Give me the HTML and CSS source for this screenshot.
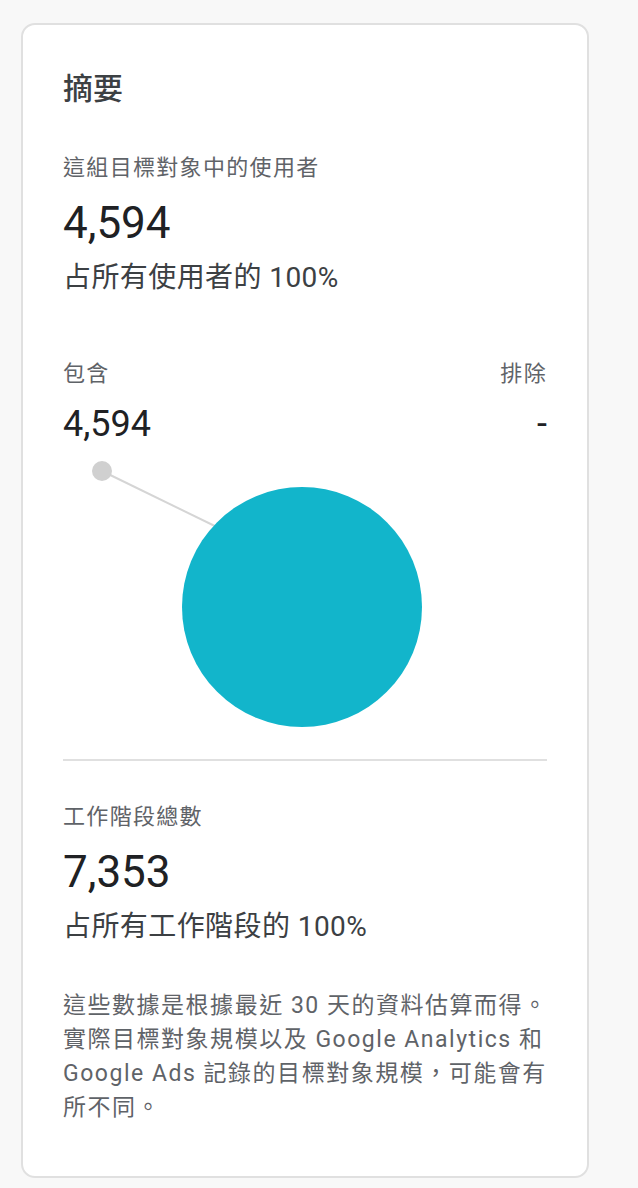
FILE: index.html
```html
<!DOCTYPE html>
<html lang="zh-Hant">
<head>
    <meta charset="UTF-8">
    <meta name="viewport" content="width=device-width, initial-scale=1.0">
    <title>摘要</title>
    <link rel="stylesheet" href="styles.css">
</head>
<body>
    <div class="card">
        <h2 class="title">摘要</h2>

        <div class="label">這組目標對象中的使用者</div>
        <div class="big-num">4,594</div>
        <div class="share">占所有使用者的 100%</div>

        <div class="split">
            <div class="col">
                <div class="label">包含</div>
                <div class="mid-num">4,594</div>
            </div>
            <div class="col right">
                <div class="label">排除</div>
                <div class="mid-num">-</div>
            </div>
        </div>

        <!-- pie chart: only one slice -->
        <svg class="pie" width="484" height="290" viewBox="0 0 484 290">
            <line x1="39" y1="15" x2="160" y2="74" stroke="#d5d5d5" stroke-width="2"/>
            <circle cx="39" cy="15" r="10" fill="#d0d0d0"/>
            <circle cx="239" cy="151" r="120" fill="#12b5cb"/>
        </svg>

        <hr class="divider">

        <div class="label">工作階段總數</div>
        <div class="big-num">7,353</div>
        <div class="share">占所有工作階段的 100%</div>

        <p class="note">這些數據是根據最近 30 天的資料估算而得。<br>實際目標對象規模以及 Google Analytics 和<br>Google Ads 記錄的目標對象規模，可能會有<br>所不同。</p>
    </div>
</body>
</html>
```

FILE: styles.css
```css
body {
    margin: 0;
    padding: 23px 0 0 21px;
    background-color: #f8f8f8;
    font-family: Roboto, "Noto Sans CJK TC", sans-serif;
    color: #202124;
}

.card {
    box-sizing: border-box;
    width: 568px;
    height: 1155px;
    background-color: white;
    border: 2px solid #e0e0e0;
    border-radius: 14px;
    padding: 44px 40px 0 40px;
}

.title {
    margin: 0 0 45px 0;
    font-size: 30px;
    line-height: 40px;
    font-weight: 500;
    color: #3c4043;
}

.label {
    font-size: 22px;
    line-height: 28px;
    letter-spacing: 0.06em;
    color: #5f6368;
}

.big-num {
    margin-top: 16px;
    font-size: 44px;
    line-height: 50px;
    color: #202124;
}

.share {
    margin-top: 12px;
    font-size: 28px;
    line-height: 36px;
    letter-spacing: 0.015em;
    color: #3c4043;
}

.split {
    display: flex;
    justify-content: space-between;
    margin-top: 64px;
}

.col.right {
    text-align: right;
}

.mid-num {
    margin-top: 14px;
    font-size: 36px;
    line-height: 44px;
    color: #202124;
}

.pie {
    display: block;
    margin-top: 10px;
}

.divider {
    border: none;
    border-top: 2px solid #e0e0e0;
    margin: 13px 0 42px 0;
}

.note {
    margin: 44px -20px 0 0;
    font-size: 23px;
    line-height: 34px;
    letter-spacing: 0.066em;
    white-space: nowrap;
    color: #5f6368;
}
```
